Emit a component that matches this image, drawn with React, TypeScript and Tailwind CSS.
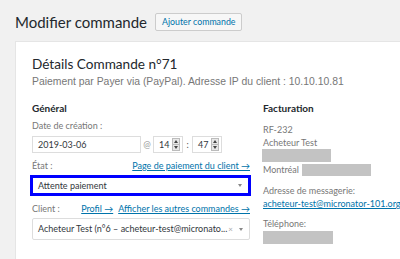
import React from "react";

const Spinner = () => (
  <div className="flex flex-col w-[8px] h-[13px] border border-[#bbb] bg-[#e8e8e8] ml-auto">
    <div className="flex-1 flex items-center justify-center border-b border-[#bbb]">
      <div className="w-0 h-0 border-l-[2.5px] border-r-[2.5px] border-b-[3px] border-l-transparent border-r-transparent border-b-[#444]" />
    </div>
    <div className="flex-1 flex items-center justify-center">
      <div className="w-0 h-0 border-l-[2.5px] border-r-[2.5px] border-t-[3px] border-l-transparent border-r-transparent border-t-[#444]" />
    </div>
  </div>
);

const Caret = () => (
  <div className="w-0 h-0 border-l-[2.5px] border-r-[2.5px] border-t-[3px] border-l-transparent border-r-transparent border-t-[#888]" />
);

export default function App() {
  return (
    <div
      className="w-[400px] h-[259px] bg-[#f1f1f1] overflow-hidden"
      style={{ fontFamily: 'Lato, "Open Sans", sans-serif' }}
    >
      {/* header */}
      <div className="flex items-center pl-[15px] pt-[13px] h-[31px] gap-[8px]">
        <h1 className="text-[15px] leading-[18px] text-[#23282d] font-normal">
          Modifier commande
        </h1>
        <div className="h-[18px] px-[6px] flex items-center border border-[#ccc] bg-[#f7f7f7] rounded-[2px] text-[8.8px] text-[#0073aa]">
          Ajouter commande
        </div>
      </div>

      {/* panel */}
      <div className="mt-[10px] ml-[15px] w-[400px] h-[240px] bg-white border border-[#e5e5e5] pl-[16px] pt-[14px]">
        <div className="text-[13.6px] leading-[16px] text-[#23282d]">Détails Commande n°71</div>
        <div
          className="mt-[4px] text-[10.4px] leading-[12px] text-[#777]"
          style={{ fontFamily: '"Liberation Sans", Arial, sans-serif' }}
        >
          Paiement par Payer via (PayPal). Adresse IP du client : 10.10.10.81
        </div>

        <div className="flex mt-[14px] gap-[11px]">
          {/* left column */}
          <div className="w-[220px] flex flex-col">
            <div className="text-[10px] leading-[13px] font-bold text-[#23282d]">Général</div>
            <div className="mt-[5px] text-[9px] leading-[12px] text-[#777]">Date de création :</div>
            <div className="mt-[4px] flex items-center h-[17px] text-[9px] text-[#32373c]">
              <div className="w-[109px] h-[17px] border border-[#ddd] flex items-center pl-[5px]">2019-03-06</div>
              <div className="w-[12px] text-center text-[#999]">@</div>
              <div className="w-[30px] h-[17px] border border-[#ddd] flex items-center pl-[5px] pr-[2px]">
                14
                <Spinner />
              </div>
              <div className="w-[9px] text-center text-[#555]">:</div>
              <div className="w-[30px] h-[17px] border border-[#ddd] flex items-center pl-[5px] pr-[2px]">
                47
                <Spinner />
              </div>
            </div>
            <div className="mt-[6px] flex items-center justify-between h-[13px] text-[9px] pr-[2px]">
              <span className="text-[#777]">État :</span>
              <span className="text-[#0073aa] underline">Page de paiement du client →</span>
            </div>
            <div className="mt-[3px] -ml-[2px] w-[221px] h-[21px] border-[3px] border-[#0000ff] bg-white flex items-center pl-[5px] pr-[6px] text-[9px] text-[#32373c]">
              <span>Attente paiement</span>
              <span className="ml-auto"><Caret /></span>
            </div>
            <div className="mt-[6px] flex items-center h-[13px] text-[9px]">
              <span className="text-[#777]">Client :</span>
              <span className="ml-auto text-[#0073aa] underline">Profil →</span>
              <span className="ml-[5px] mr-[2px] text-[#0073aa] underline">Afficher les autres commandes →</span>
            </div>
            <div className="mt-[3px] w-[218px] h-[22px] border border-[#ddd] rounded-[2px] bg-white flex items-center pl-[5px] pr-[6px] text-[9px] text-[#32373c]">
              <span className="whitespace-nowrap">Acheteur Test (n°6 – acheteur-test@micronato...</span>
              <span className="ml-auto text-[#aaa] text-[8px]">×</span>
              <span className="ml-[6px]"><Caret /></span>
            </div>
          </div>

          {/* right column */}
          <div className="flex flex-col text-[9px] text-[#777]">
            <div className="text-[10px] leading-[13px] font-bold text-[#23282d]">Facturation</div>
            <div className="mt-[8px] leading-[13px]">RF-232</div>
            <div className="leading-[13px]">Acheteur Test</div>
            <div className="w-[69px] h-[13px] bg-[#c3c3c3] -ml-[1px]" />
            <div className="mt-[2px] flex items-center h-[12px]">
              <span>Montréal</span>
              <span className="ml-[3px] w-[69px] h-[12px] bg-[#c3c3c3]" />
            </div>
            <div className="mt-[8px] leading-[13px]">Adresse de messagerie:</div>
            <div className="leading-[14px] text-[#0073aa] underline whitespace-nowrap">acheteur-test@micronator-101.org</div>
            <div className="mt-[6px] leading-[13px]">Téléphone:</div>
            <div className="mt-[1px] w-[70px] h-[13px] bg-[#c3c3c3]" />
          </div>
        </div>
      </div>
    </div>
  );
}
